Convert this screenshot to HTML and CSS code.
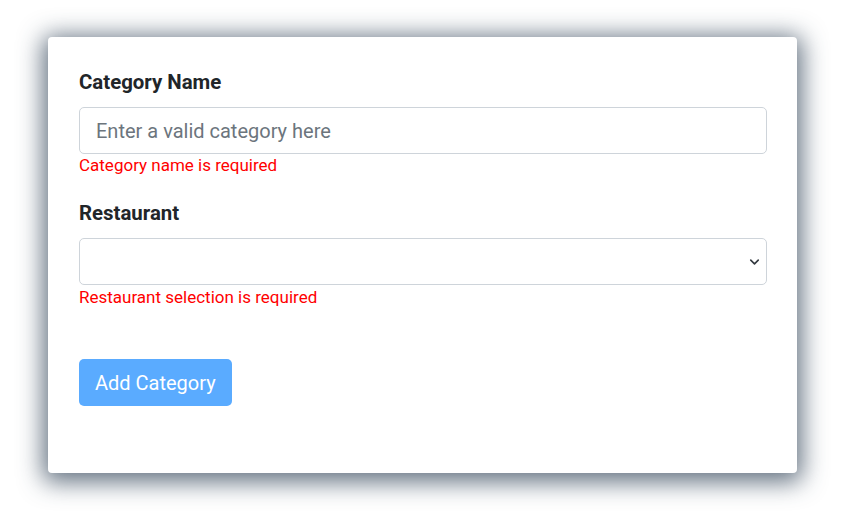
FILE: index.html
```html
<!DOCTYPE html>
<html>
<head>
<meta charset="utf-8">
<link rel="stylesheet" href="styles.css">
</head>
<body>
<div class="card">
  <form class="form">
    <div class="field">
      <label class="label">Category Name</label>
      <input class="control" type="text" placeholder="Enter a valid category here">
      <div class="error">Category name is required</div>
    </div>
    <div class="field">
      <label class="label">Restaurant</label>
      <div class="select">
        <svg class="chev" width="13" height="10" viewBox="0 0 16 16"><path d="M2 5l6 6 6-6" fill="none" stroke="#343a40" stroke-width="2.6" stroke-linecap="round" stroke-linejoin="round"/></svg>
      </div>
      <div class="error">Restaurant selection is required</div>
    </div>
    <button class="btn" type="button">Add Category</button>
  </form>
</div>
</body>
</html>
```

FILE: styles.css
```css
* { box-sizing: border-box; }
html, body { margin: 0; padding: 0; background: #fff; }
body { font-family: Roboto, "Liberation Sans", sans-serif; color: #212529; padding: 37px 0 46px 48px; }
.card {
  width: 749px;
  height: 436px;
  background: #fff;
  border-radius: 4px;
  box-shadow: 0 4px 24px 5px rgba(40, 60, 80, 0.72);
  padding: 33px 30px 0 31px;
}
.form { display: flex; flex-direction: column; }
.field { display: flex; flex-direction: column; }
.field + .field { margin-top: 26px; }
.label { font-size: 20.4px; font-weight: 700; line-height: 24px; margin-bottom: 13px; }
.control, .select {
  width: 100%;
  height: 47px;
  border: 1px solid #ced4da;
  border-radius: 5px;
  padding: 0 16px;
  font-family: inherit;
  font-size: 20px;
  color: #212529;
  background: #fff;
  outline: none;
}
.control::placeholder { color: #6c757d; }
.select { display: flex; align-items: center; justify-content: flex-end; padding-right: 5px; }
.chev { display: block; }
.error { color: #f00; font-size: 17px; line-height: 20px; margin-top: 1px; }
.field + .field .error { margin-top: 2px; }
.btn {
  align-self: flex-start;
  margin-top: 52px;
  height: 47px;
  padding: 0 16px;
  border: 0;
  border-radius: 5px;
  background: #5aabff;
  color: #fff;
  font-family: inherit;
  font-size: 20px;
}
```
